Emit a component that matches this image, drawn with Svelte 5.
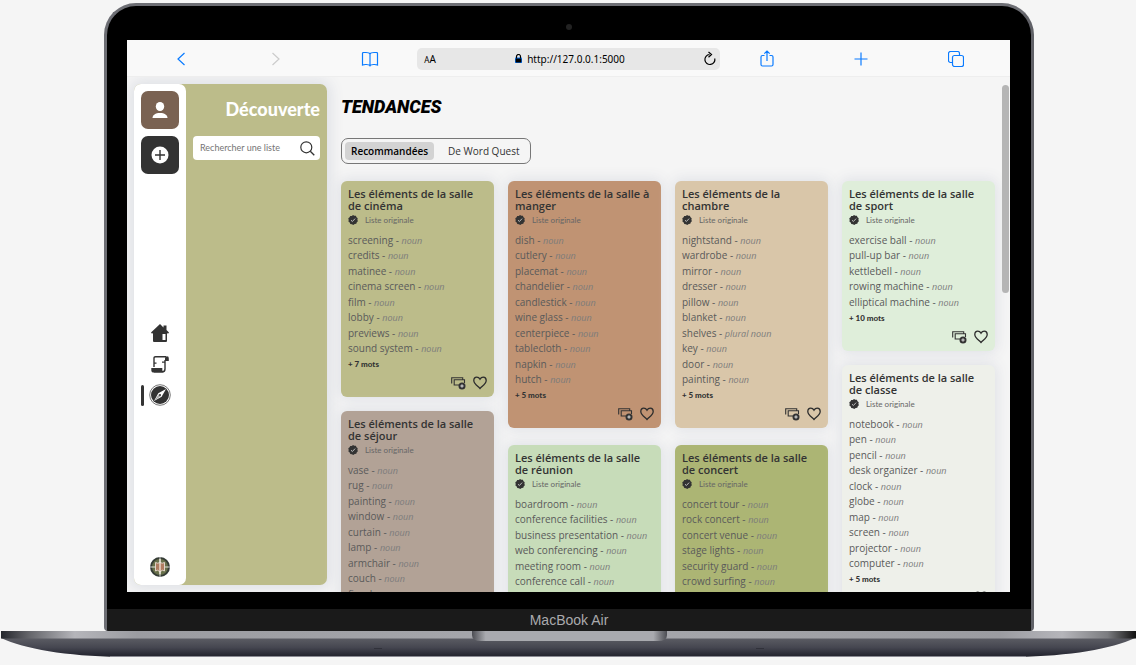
<script>
  const cell = (text, type = 'noun') => ({ text, type });
  const words = (list) => list.split(', ').map((text) => cell(text));

  const chambre = words('nightstand, wardrobe, mirror, dresser, pillow, blanket, shelves, key, door, painting');
  chambre[6].type = 'plural noun';

  const columns = [
    {
      wide: false,
      cards: [
        { title: 'Les éléments de la salle de cinéma', tone: 'olive', more: 7, items: words('screening, credits, matinee, cinema screen, film, lobby, previews, sound system') },
        { title: 'Les éléments de la salle de séjour', tone: 'taupe', more: 5, items: words('vase, rug, painting, window, curtain, lamp, armchair, couch, fireplace') }
      ]
    },
    {
      wide: true,
      cards: [
        { title: 'Les éléments de la salle à manger', tone: 'clay', more: 5, items: words('dish, cutlery, placemat, chandelier, candlestick, wine glass, centerpiece, tablecloth, napkin, hutch') },
        { title: 'Les éléments de la salle de réunion', tone: 'mint', more: 5, items: words('boardroom, conference facilities, business presentation, web conferencing, meeting room, conference call') }
      ]
    },
    {
      wide: true,
      cards: [
        { title: 'Les éléments de la chambre', tone: 'sand', more: 5, items: chambre },
        { title: 'Les éléments de la salle de concert', tone: 'moss', more: 5, items: words('concert tour, rock concert, concert venue, stage lights, security guard, crowd surfing') }
      ]
    },
    {
      wide: false,
      cards: [
        { title: 'Les éléments de la salle de sport', tone: 'pale', more: 10, items: words('exercise ball, pull-up bar, kettlebell, rowing machine, elliptical machine') },
        { title: 'Les éléments de la salle de classe', tone: 'mist', more: 5, items: words('notebook, pen, pencil, desk organizer, clock, globe, map, screen, projector, computer') }
      ]
    }
  ];

  let tab = $state('Recommandées');
</script>

<div class="laptop">
  <div class="lid">
    <div class="bezel"><span class="camera"></span></div>
    <div class="screen">
      <header class="toolbar">
        <button aria-label="Page précédente"><svg width="10" height="14" viewBox="0 0 10 14"><path d="M8.500 1 2 7l6.500 6" /></svg></button>
        <button class="off" aria-label="Page suivante"><svg width="10" height="14" viewBox="0 0 10 14"><path d="M1.500 1 8 7l-6.500 6" /></svg></button>
        <button aria-label="Signets"><svg width="18" height="16" viewBox="0 0 18 16"><path d="M9 3C8.500 1.500 7 1.500 5 1.500H2.500Q1.500 1.500 1.500 2.500V14c1-.6 6.500-1 7.500.8 1-1.800 6.500-1.400 7.500-.8V2.500q0-1-1-1H13c-2 0-3.500 0-4 1.500v11.500" /></svg></button>
        <div class="address">
          <span class="size"><small>A</small>A</span>
          <span class="url"><svg width="7" height="9" viewBox="0 0 7 9"><rect y="4" width="7" height="5" rx="1" fill="#000" /><path d="M1.500 4.500v-2a2 2 0 0 1 4 0v2" fill="none" stroke="#000" stroke-width="1.200" /></svg>http://127.0.0.1:5000</span>
          <button class="reload" aria-label="Actualiser"><svg width="12" height="15" viewBox="0 0 12 15"><path d="M5.500 3.500a5 5 0 1 0 5.300 4M4.500 1l3 2.500-3 2.700" /></svg></button>
        </div>
        <button aria-label="Partager"><svg width="14" height="17" viewBox="0 0 14 17"><path d="M4.500 5.500h-2a1.500 1.500 0 0 0-1.500 1.500v7.500a1.500 1.500 0 0 0 1.500 1.500h9a1.500 1.500 0 0 0 1.500-1.500V7a1.500 1.500 0 0 0-1.500-1.500h-2M7 11V1.200M4.300 3.700 7 1l2.700 2.700" /></svg></button>
        <button aria-label="Nouvel onglet"><svg width="14" height="14" viewBox="0 0 14 14"><path d="M7 .5v13M.5 7h13" /></svg></button>
        <button aria-label="Onglets"><svg width="16" height="16" viewBox="0 0 16 16"><rect x="4.500" y="4.500" width="11" height="11" rx="2" /><path d="M4.500 11.500h-2a2 2 0 0 1-2-2v-7a2 2 0 0 1 2-2h7a2 2 0 0 1 2 2v2" /></svg></button>
      </header>

      <div class="app">
        <aside class="sidebar">
          <nav class="rail">
            <button class="tile user" aria-label="Profil"><svg width="16" height="16" viewBox="0 0 16 16"><ellipse cx="8" cy="4.500" rx="4.200" ry="4.500" fill="#fff" /><path d="M.5 16c0-3 3-5 7.500-5s7.500 2 7.500 5z" fill="#fff" /></svg></button>
            <button class="tile add" aria-label="Ajouter"><svg width="18" height="18" viewBox="0 0 18 18"><circle cx="9" cy="9" r="8.500" fill="#fff" /><path d="M9 4v10M4 9h10" stroke="#333" stroke-width="1.400" /></svg></button>
            <div class="links">
              <a href="#accueil" aria-label="Accueil"><svg width="18" height="18" viewBox="0 0 18 18"><path fill="#333" fill-rule="evenodd" d="M9 0 0 8.500l1 1.300 1-.7V17q0 1 1 1h12q1 0 1-1V9l1 .8 1-1.300-2.500-2.500V1.500h-3v2zm2.500 10h3v6h-3z" /></svg></a>
              <a href="#listes" aria-label="Listes"><svg width="18" height="17" viewBox="0 0 18 17"><path d="M3 11V2.200Q3 .7 4.500.7H15M14 4v9q0 2.800-2.500 2.800H3" fill="none" stroke="#333" stroke-width="1.400" /><path d="M14 5V2.500Q14 .2 16 .2t1.800 2.300V5zM.3 12h11v2q.2 2 1.500 2.600H3Q.3 16.600.3 14zM3 6.500h2.500v1.200H3zm8-1h3v1.200h-3z" fill="#333" /></svg></a>
              <a href="#decouverte" class="current" aria-label="Découverte"><svg width="22" height="22" viewBox="0 0 22 22"><circle cx="11" cy="11" r="10.300" fill="#fff" stroke="#555" stroke-width=".8" /><circle cx="11" cy="11" r="9" fill="#333" /><path d="m17 5-4.400 7.800L5 17l4.300-7.800z" fill="#fff" /><path d="m10 10-5 7 7-5z" fill="#aaa" /><circle cx="11" cy="11" r="1" fill="#333" /></svg></a>
            </div>
            <a class="logo" href="#wordquest" aria-label="Word Quest"><svg width="22" height="22" viewBox="0 0 22 22"><circle cx="11" cy="11" r="9" fill="#68704a" stroke="#343b35" stroke-width="2" /><path d="M11 1v20M1 11h20" stroke="#fff" stroke-width=".8" /><path d="m6.500 6.500 2.200.7L11 6.500l2.300.7 2.200-.7v8.500l-2.200-.8-2.300 1.800-2.300-1.800-2.200.8z" fill="#b07d61" stroke="#e8ded2" stroke-width=".9" /><path d="M11 3v15" stroke="#f5f0e8" stroke-width="1.200" /></svg></a>
          </nav>
          <section class="panel">
            <h2>Découverte</h2>
            <label class="search">
              <input type="search" placeholder="Rechercher une liste" aria-label="Rechercher une liste" />
              <svg width="15" height="15" viewBox="0 0 15 15"><circle cx="6.300" cy="6.300" r="5.500" fill="none" stroke="#333" stroke-width="1.200" /><path d="m10.300 10.300 4 4" stroke="#333" stroke-width="1.300" /></svg>
            </label>
          </section>
        </aside>

        <main>
          <h1>TENDANCES</h1>
          <div class="tabs">
            {#each ['Recommandées', 'De Word Quest'] as name}
              <button class:active={tab === name} aria-pressed={tab === name} onclick={() => (tab = name)}>{name}</button>
            {/each}
          </div>
          <div class="board">
            {#each columns as column}
              <div class="column" class:wide={column.wide}>
                {#each column.cards as card}
                  <article class={card.tone}>
                    <h3>{card.title}</h3>
                    <p class="origin"><svg width="10" height="10" viewBox="0 0 10 10"><path fill="#333" d="m5 0 1.300.8L7.900.8l.6 1.400 1.200 1-.3 1.500.5 1.500-1.100 1.100-.5 1.500-1.600.2L5.300 10l-1.400-.8-1.600-.1-.6-1.500L.4 6.500l.3-1.600L.3 3.300l1.300-1 .6-1.400 1.600.1z" /><path d="m3 5.200 1.400 1.300 2.700-2.900" fill="none" stroke="#ccc" stroke-width=".9" /></svg>Liste originale</p>
                    <ul>
                      {#each card.items as item}
                        <li>{item.text} - <em>{item.type}</em></li>
                      {/each}
                    </ul>
                    <p class="more">+ {card.more} mots</p>
                    <div class="actions">
                      <button aria-label="Ajouter aux cartes"><svg width="15" height="14" viewBox="0 0 15 14"><path d="M8 9H3.200V3.700h10.300V7M1.200 7H.7V1.700h11v1.500" fill="none" stroke="#333" stroke-width="1.100" /><circle cx="11" cy="10" r="3.500" fill="#333" /><path d="M11 8.300v3.400M9.300 10h3.400" stroke="#eee" stroke-width=".9" /></svg></button>
                      <button aria-label="Aimer"><svg width="14" height="14" viewBox="0 0 14 14"><path d="M7 12.500C4 9.500.8 7.500.8 4.400.8 2.500 2.200 1.200 3.800 1.200 5.300 1.200 6.300 2 7 3.200c.7-1.200 1.700-2 3.200-2 1.600 0 3 1.300 3 3.200 0 3.100-3.200 5.100-6.200 8.100z" fill="none" stroke="#2d2d2d" stroke-width="1.300" /></svg></button>
                    </div>
                  </article>
                {/each}
              </div>
            {/each}
          </div>
        </main>
        <div class="scrollbar"><span></span></div>
      </div>
    </div>
    <div class="chin">MacBook Air</div>
  </div>
  <svg class="base" viewBox="0 0 1136 26" preserveAspectRatio="none">
    <defs>
      <linearGradient id="deck">
        <stop offset="0" stop-color="#25272d" /><stop offset=".025" stop-color="#65666b" /><stop offset=".065" stop-color="#b5b5ba" /><stop offset=".12" stop-color="#9b9ca1" /><stop offset=".5" stop-color="#a7a8ad" /><stop offset=".88" stop-color="#9b9ca1" /><stop offset=".935" stop-color="#b5b5ba" /><stop offset=".975" stop-color="#7b7c80" /><stop offset="1" stop-color="#111" />
      </linearGradient>
      <linearGradient id="belly" x2="0" y2="1">
        <stop offset="0" stop-color="#5c5d64" /><stop offset=".5" stop-color="#454650" /><stop offset=".85" stop-color="#2a2b36" /><stop offset="1" stop-color="#22222c" />
      </linearGradient>
      <linearGradient id="notch">
        <stop offset="0" stop-color="#4c4d53" /><stop offset=".07" stop-color="#a9aaaf" /><stop offset=".93" stop-color="#a9aaaf" /><stop offset="1" stop-color="#4c4d53" />
      </linearGradient>
    </defs>
    <path d="M1 7C25 18 65 25 120 26h896c55-1 95-8 119-19z" fill="url(#belly)" />
    <path d="M110 25.500h916" stroke="#8a8a93" />
    <path d="M1 0h1135v7.500H1z" fill="url(#deck)" />
    <path d="M472 0h195v4q0 6-9 6H481q-9 0-9-6z" fill="url(#notch)" />
    <path d="M374 17.500h8M756 17.500h8" stroke="#30313a" />
  </svg>
</div>

<style>
  :global(body) { margin: 0; background: #f5f5f5; }
  * { box-sizing: border-box; }
  h1, h2, h3, p, ul { margin: 0; padding: 0; }
  button { border: 0; padding: 0; background: none; font: inherit; color: inherit; display: grid; place-items: center; cursor: pointer; }
  svg { display: block; flex: none; }

  .laptop { height: 100vh; display: flex; flex-direction: column; padding: 3px 0 8px; font-family: Lato, "Open Sans", sans-serif; color: #333; }
  .lid { flex: 1; min-height: 0; margin: 0 102px 0 104px; display: flex; flex-direction: column; border: 3px solid #6d6e74; border-bottom: 0; border-color: #6d6e74 #606167 #606167 #6d6e74; border-radius: 32px 32px 4px 4px; background: #000; overflow: hidden; }
  .bezel { height: 34px; flex: none; display: grid; place-items: center; padding-top: 8px; }
  .camera { width: 6px; height: 6px; border-radius: 50%; background: #222; }
  .screen { flex: 1; min-height: 0; margin: 0 21px 17px 20px; background: #f5f5f5; display: flex; flex-direction: column; overflow: hidden; }
  .chin { height: 22px; flex: none; background: #1a1a1a; color: #aaaaad; display: grid; place-items: center; font: 14px "Liberation Sans", sans-serif; }
  .base { width: 100%; height: 26px; flex: none; }

  .toolbar { height: 37px; flex: none; padding: 1px 7px 0; display: grid; grid-template-columns: 10fr 10fr 10fr 32fr 10fr 10fr 10fr; align-items: center; background: #f9f9f9; border-bottom: 1px solid #eee; }
  .toolbar svg { fill: none; stroke: #0a7bff; stroke-width: 1.2; }
  .toolbar .off svg { stroke: #ccc; }
  .address { height: 22px; border-radius: 5px; background: #e7e7e7; display: grid; grid-template-columns: 1fr auto 1fr; align-items: center; padding: 0 4px 0 7px; font: 10px "Noto Sans", sans-serif; color: #000; }
  .size small { font-size: 8px; }
  .url { display: flex; align-items: center; gap: 5px; }
  .toolbar .reload { justify-self: end; }
  .toolbar .reload svg { stroke: #000; }

  .app { flex: 1; min-height: 0; display: flex; overflow: hidden; }
  .sidebar { flex: none; width: 193px; margin: 7px 14px 7px 7px; display: flex; border-radius: 7px; background: #bcbc8a; box-shadow: 0 0 14px 4px #dfe1e6; }
  .rail { width: 52px; display: flex; flex-direction: column; align-items: center; gap: 7px; padding: 7px 0; border-radius: 7px; background: #fff; }
  .tile { width: 38px; height: 38px; border-radius: 7px; }
  .user { background: #7a6252; }
  .add { background: #333; }
  .links { flex: 1; width: 100%; display: flex; flex-direction: column; justify-content: center; padding-bottom: 2px; }
  .links a { height: 31px; display: grid; place-items: center; position: relative; }
  .links .current::before { content: ""; position: absolute; left: 7px; top: 5px; width: 3px; height: 21px; border-radius: 2px; background: #333; }
  .panel { flex: 1; min-width: 0; padding: 13px 7px; }
  .panel h2 { font-size: 18px; line-height: 24px; font-weight: 900; color: #fff; text-align: right; }
  .search { height: 24px; margin-top: 15px; display: flex; align-items: center; padding: 0 5px 0 7px; border-radius: 4px; background: #fff; }
  .search input { flex: 1; min-width: 0; border: 0; outline: 0; padding: 0 0 2px; background: none; font: 9px Lato, sans-serif; color: #333; }
  .search input::placeholder { color: #757575; }

  main { flex: 1; min-width: 0; }
  h1 { margin-top: 14px; font: italic 900 18px/32px Roboto, sans-serif; color: #000; }
  .tabs { display: flex; width: fit-content; margin-top: 15px; padding: 3px; height: 26px; border: 1px solid #777; border-radius: 7px; font: 10px "Open Sans", sans-serif; }
  .tabs button { padding: 0 6px; border-radius: 4px; }
  .tabs button + button { padding: 0 8px 0 14px; }
  .tabs .active { background: #d3d3d3; font-weight: 600; color: #000; }
  .board { display: grid; grid-template-columns: repeat(4, minmax(0, 1fr)); gap: 14px; margin-top: 17px; }
  .column { display: flex; flex-direction: column; gap: 14px; }
  .wide { gap: 17px; }
  article { padding: 7px; border-radius: 6px; box-shadow: 0 0 14px 2px #dfe1e6; }
  .olive { background: #bcbc8a; }
  .taupe { background: #b2a296; }
  .clay { background: #c09373; }
  .mint { background: #c7dcb9; }
  .sand { background: #d9c6a9; }
  .moss { background: #acb574; }
  .pale { background: #dfeeda; }
  .mist { background: #eef0ea; }
  h3 { font: 600 11px/12px "Open Sans", sans-serif; }
  .origin { display: flex; align-items: center; gap: 7px; height: 14px; margin: 1px 0 5px; font-size: 8px; color: #666; }
  ul { list-style: none; font: 10px "Open Sans", sans-serif; color: #5a5a5a; }
  li { line-height: 16px; white-space: nowrap; }
  li:nth-child(even) { line-height: 15px; }
  em { font-size: 9px; line-height: 1; color: #7b7b7b; }
  .more { margin-top: 2px; font-size: 8px; line-height: 12px; font-weight: 900; }
  .actions { height: 14px; margin-top: 6px; display: flex; justify-content: flex-end; gap: 7px; }
  .scrollbar { width: 9px; margin: 8px 0 0 6px; flex: none; padding-left: 1px; }
  .scrollbar span { display: block; width: 7px; height: 41%; border-radius: 4px; background: #b5b5b5; }
</style>
